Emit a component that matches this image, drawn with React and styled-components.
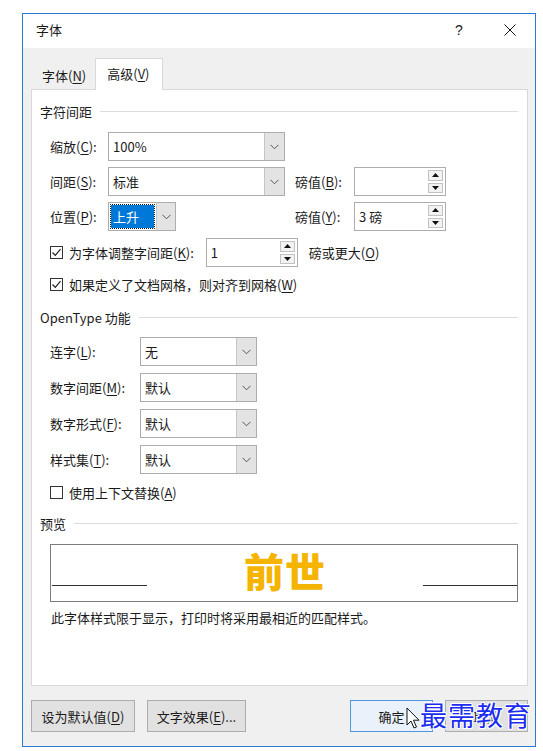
import React from 'react';
import styled, { createGlobalStyle } from 'styled-components';

const GlobalStyle = createGlobalStyle`
  html, body {
    margin: 0;
    padding: 0;
    background: #fff;
  }
  body {
    font-family: "Noto Sans CJK SC", "Microsoft YaHei", sans-serif;
    font-size: 13px;
    color: #1a1a1a;
  }
  * { box-sizing: border-box; }
`;

const Page = styled.div`
  position: relative;
  width: 543px;
  height: 751px;
  padding: 13px 0 0 22px;
`;

const Dialog = styled.div`
  width: 514px;
  height: 734px;
  border: 1px solid #2b7ad0;
  background: #f0f0f0;
  display: flex;
  flex-direction: column;
`;

const TitleBar = styled.div`
  height: 34px;
  background: #fff;
  display: flex;
  align-items: center;
  padding: 0 0 3px 13px;
  line-height: 1;
`;

const Title = styled.div`
  flex: 1;
`;

const TitleBtn = styled.div`
  width: ${p => p.$w}px;
  margin-right: ${p => p.$mr}px;
  height: 31px;
  display: flex;
  align-items: center;
  justify-content: center;
  font-family: "Liberation Sans", sans-serif;
  font-size: 14px;
`;

const TabStrip = styled.div`
  height: 41px;
  display: flex;
  align-items: flex-end;
  padding-left: 8px;
`;

const Tab = styled.div`
  height: ${p => (p.$active ? 32 : 28)}px;
  padding: ${p => (p.$active ? '0 9px 2px 11px' : '0 8px 0 10px')};
  min-width: ${p => (p.$active ? 68 : 0)}px;
  display: flex;
  align-items: center;
  background: ${p => (p.$active ? '#fff' : 'transparent')};
  border: 1px solid ${p => (p.$active ? '#d9d9d9' : 'transparent')};
  border-bottom: none;
  margin-bottom: ${p => (p.$active ? -1 : 0)}px;
  position: relative;
  z-index: 1;
  line-height: 1;
`;

const U = styled.span`
  text-decoration: underline;
  text-underline-offset: 2px;
`;

const Panel = styled.div`
  height: 597px;
  margin: 0 7px 0 8px;
  background: #fff;
  border: 1px solid #d9d9d9;
  padding: 11px 9px 0 8px;
  display: flex;
  flex-direction: column;
`;

const GroupHeader = styled.div`
  height: 20px;
  display: flex;
  align-items: center;
  gap: 8px;
  margin-top: ${p => p.$mt || 0}px;
  line-height: 1;
  &::after {
    content: '';
    flex: 1;
    height: 1px;
    background: #dcdcdc;
  }
`;

const SpacingGrid = styled.div`
  display: grid;
  grid-template-columns: 58px 177px 10px 59px 92px;
  grid-auto-rows: 29px;
  row-gap: 6px;
  margin-top: 11px;
  padding-left: 10px;
  align-items: center;
`;

const Label = styled.div`
  line-height: 1;
  white-space: nowrap;
`;

const Combo = styled.div`
  width: ${p => p.$w}px;
  height: 29px;
  border: 1px solid #adadad;
  background: #fff;
  display: flex;
`;

const ComboText = styled.div`
  flex: 1;
  display: flex;
  align-items: center;
  padding-left: 4px;
  line-height: 1;
`;

const Selected = styled.div`
  flex: 1;
  margin: 2px;
  background: #0078d7;
  color: #fff;
  outline: 1px dotted #222;
  display: flex;
  align-items: center;
  padding-left: 2px;
  line-height: 1;
`;

const DropBtn = styled.div`
  width: ${p => p.$w || 20}px;
  background: #e3e3e3;
  border-left: 1px solid #c6c6c6;
  display: flex;
  align-items: center;
  justify-content: center;
`;

const Spin = styled.div`
  width: 92px;
  height: 29px;
  border: 1px solid #adadad;
  background: #fff;
  display: flex;
`;

const SpinText = styled.div`
  flex: 1;
  display: flex;
  align-items: center;
  padding-left: 4px;
  line-height: 1;
`;

const SpinBtns = styled.div`
  width: 17px;
  padding: 2px 2px 2px 0;
  display: flex;
  flex-direction: column;
  gap: 2px;
`;

const SpinBtn = styled.div`
  flex: 1;
  background: #f2f2f2;
  border: 1px solid #c2c2c2;
  display: flex;
  align-items: center;
  justify-content: center;
`;

const CheckRow = styled.div`
  display: flex;
  align-items: center;
  height: ${p => p.$h || 20}px;
  margin-top: ${p => p.$mt || 0}px;
  padding-left: 10px;
  line-height: 1;
  white-space: nowrap;
`;

const Gap = styled.span`
  width: ${p => p.$w}px;
  flex: none;
`;

const Box = styled.div`
  width: 13px;
  height: 13px;
  border: 1px solid #333;
  background: #fff;
  margin-right: 6px;
  display: flex;
  align-items: center;
  justify-content: center;
`;

const OtGrid = styled.div`
  display: grid;
  grid-template-columns: 90px 117px;
  grid-auto-rows: 29px;
  row-gap: 7px;
  margin-top: 10px;
  padding-left: 10px;
  align-items: center;
`;

const Preview = styled.div`
  height: 58px;
  margin: 11px 0 0 10px;
  width: 468px;
  border: 1px solid #7d7d7d;
  display: flex;
`;

const PreviewLine = styled.div`
  width: ${p => p.$w}px;
  margin-left: ${p => p.$ml || 0}px;
  align-self: flex-end;
  margin-bottom: 15px;
  height: 1px;
  background: #333;
`;

const PreviewText = styled.div`
  flex: 1;
  display: flex;
  align-items: center;
  justify-content: center;
  padding-bottom: 6px;
  font-size: 40px;
  font-weight: 900;
  color: #f5b400;
  line-height: 1;
  letter-spacing: 1px;
`;

const Note = styled.div`
  margin-top: 6px;
  padding-left: 11px;
  line-height: 20px;
  white-space: nowrap;
`;

const Footer = styled.div`
  display: flex;
  margin: 14px 7px 0 8px;
  gap: 12px;
`;

const Button = styled.div`
  width: ${p => p.$w}px;
  height: 32px;
  margin-left: ${p => (p.$push ? 'auto' : '0')};
  background: ${p => (p.$primary ? '#e9f2fb' : '#e1e1e1')};
  border: 1px solid ${p => (p.$primary ? '#4f97de' : '#adadad')};
  display: flex;
  align-items: center;
  justify-content: center;
  line-height: 1;
  white-space: nowrap;
`;

const Watermark = styled.div`
  position: absolute;
  left: 420px;
  top: 701px;
  font-family: "Noto Sans CJK SC", sans-serif;
  font-size: 27px;
  font-weight: 400;
  letter-spacing: 1px;
  color: #1c2df0;
  line-height: 1;
  text-shadow: -1px -1px 0 #fff, 1px -1px 0 #fff, -1px 1px 0 #fff, 1px 1px 0 #fff;
`;

const Cursor = styled.svg`
  position: absolute;
  left: 406px;
  top: 707px;
`;

const Chevron = () => (
  <svg width="9" height="6" viewBox="0 0 9 6">
    <polyline points="0.5,0.8 4.5,4.8 8.5,0.8" fill="none" stroke="#555" strokeWidth="1" />
  </svg>
);

const Tri = ({ down }) => (
  <svg width="7" height="4" viewBox="0 0 7 4">
    <polygon points={down ? '0,0 7,0 3.5,4' : '0,4 7,4 3.5,0'} fill="#111" />
  </svg>
);

const Check = ({ on }) => (
  <Box>
    {on && (
      <svg width="11" height="11" viewBox="0 0 11 11">
        <polyline points="1.5,5.5 4.3,8.3 9.5,2.2" fill="none" stroke="#222" strokeWidth="1.2" />
      </svg>
    )}
  </Box>
);

const SpinBox = ({ value }) => (
  <Spin>
    <SpinText>{value}</SpinText>
    <SpinBtns>
      <SpinBtn><Tri /></SpinBtn>
      <SpinBtn><Tri down /></SpinBtn>
    </SpinBtns>
  </Spin>
);

const otRows = [
  ['连字', 'L', '无'],
  ['数字间距', 'M', '默认'],
  ['数字形式', 'F', '默认'],
  ['样式集', 'T', '默认'],
];

export default function App() {
  return (
    <Page>
      <GlobalStyle />
      <Dialog>
        <TitleBar>
          <Title>字体</Title>
          <TitleBtn $w={40} $mr={8}>?</TitleBtn>
          <TitleBtn $w={46} $mr={2}>
            <svg width="12" height="12" viewBox="0 0 12 12">
              <path d="M0.5 0.5 L11.5 11.5 M11.5 0.5 L0.5 11.5" stroke="#111" strokeWidth="1" />
            </svg>
          </TitleBtn>
        </TitleBar>

        <TabStrip>
          <Tab>字体(<U>N</U>)</Tab>
          <Tab $active>高级(<U>V</U>)</Tab>
        </TabStrip>

        <Panel>
          <GroupHeader>字符间距</GroupHeader>
          <SpacingGrid>
            <Label>缩放(<U>C</U>):</Label>
            <Combo $w={177}>
              <ComboText>100%</ComboText>
              <DropBtn><Chevron /></DropBtn>
            </Combo>
            <div />
            <div />
            <div />

            <Label>间距(<U>S</U>):</Label>
            <Combo $w={177}>
              <ComboText>标准</ComboText>
              <DropBtn><Chevron /></DropBtn>
            </Combo>
            <div />
            <Label>磅值(<U>B</U>):</Label>
            <SpinBox value="" />

            <Label>位置(<U>P</U>):</Label>
            <Combo $w={68}>
              <Selected>上升</Selected>
              <DropBtn $w={19}><Chevron /></DropBtn>
            </Combo>
            <div />
            <Label>磅值(<U>Y</U>):</Label>
            <SpinBox value="3 磅" />
          </SpacingGrid>

          <CheckRow $h={29} $mt={7}>
            <Check on />
            为字体调整字间距(<U>K</U>):
            <Gap $w={12} />
            <SpinBox value="1" />
            <Gap $w={11} />
            磅或更大(<U>O</U>)
          </CheckRow>
          <CheckRow $mt={7}>
            <Check on />
            如果定义了文档网格，则对齐到网格(<U>W</U>)
          </CheckRow>

          <GroupHeader $mt={13}>OpenType 功能</GroupHeader>
          <OtGrid>
            {otRows.map(([name, key, val]) => (
              <React.Fragment key={key}>
                <Label>{name}(<U>{key}</U>):</Label>
                <Combo $w={117}>
                  <ComboText>{val}</ComboText>
                  <DropBtn><Chevron /></DropBtn>
                </Combo>
              </React.Fragment>
            ))}
          </OtGrid>
          <CheckRow $mt={8}>
            <Check />
            使用上下文替换(<U>A</U>)
          </CheckRow>

          <GroupHeader $mt={11}>预览</GroupHeader>
          <Preview>
            <PreviewLine $w={95} $ml={1} />
            <PreviewText>前世</PreviewText>
            <PreviewLine $w={94} />
          </Preview>
          <Note>此字体样式限于显示，打印时将采用最相近的匹配样式。</Note>
        </Panel>

        <Footer>
          <Button $w={104}>设为默认值(<U>D</U>)</Button>
          <Button $w={99}>文字效果(<U>E</U>)...</Button>
          <Button $w={83} $push $primary>确定</Button>
          <Button $w={83}>取消</Button>
        </Footer>
      </Dialog>

      <Cursor width="14" height="23" viewBox="0 0 14 23">
        <path d="M1 1 L1 18 L5 14 L8 21 L10.5 20 L7.5 13.2 L13 13.2 Z" fill="#fff" stroke="#111" strokeWidth="1" strokeLinejoin="round" />
      </Cursor>
      <Watermark>最需教育</Watermark>
    </Page>
  );
}
